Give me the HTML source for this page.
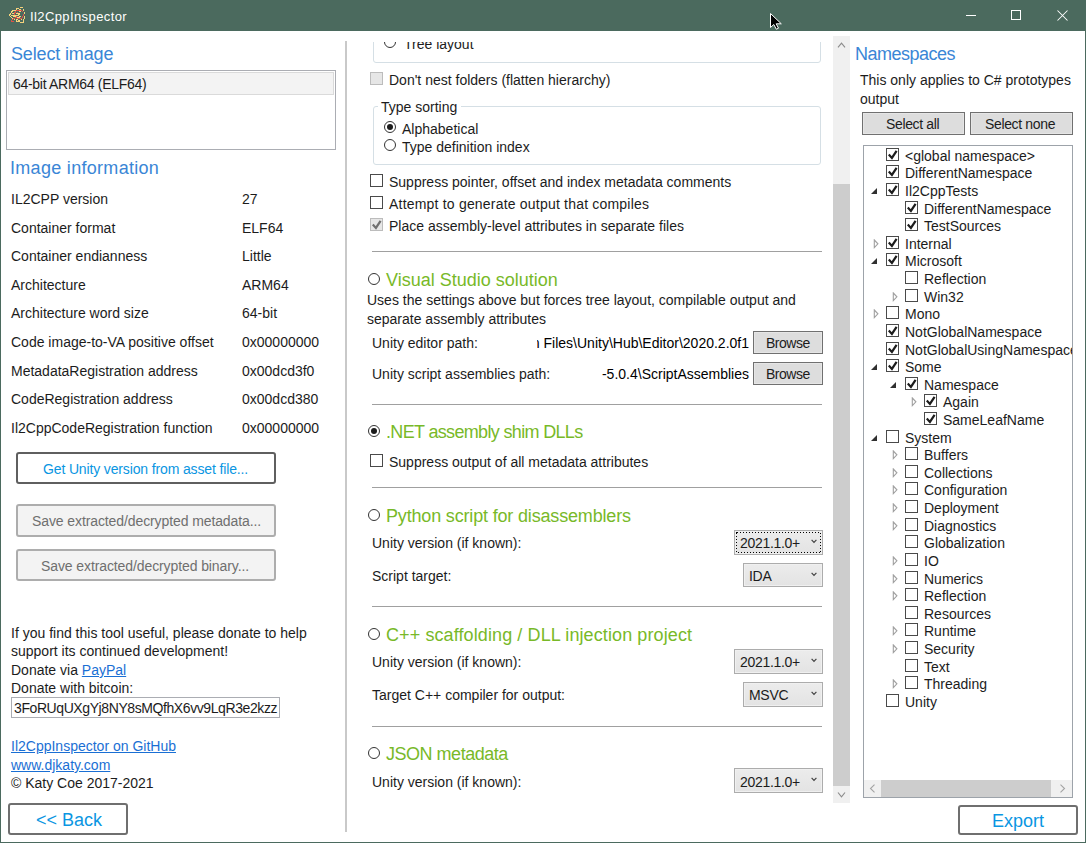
<!DOCTYPE html>
<html><head><meta charset="utf-8"><style>
html,body{margin:0;padding:0;width:1086px;height:843px;overflow:hidden;background:#fff}
body{position:relative;font-family:"Liberation Sans",sans-serif}
.t{position:absolute;white-space:nowrap;font-family:"Liberation Sans",sans-serif}
.r{position:absolute;box-sizing:border-box}
.clip{position:absolute;overflow:hidden}
</style></head><body>

<div class="r" style="left:0px;top:0px;width:1086px;height:31px;background:#4b6a5e"></div>
<div class="r" style="left:0px;top:31px;width:1px;height:812px;background:#4b6a5e"></div>
<div class="r" style="left:1085px;top:31px;width:1px;height:812px;background:#4b6a5e"></div>
<div class="r" style="left:0px;top:842px;width:1086px;height:1px;background:#4b6a5e"></div>
<svg class="r" style="left:7px;top:5px" width="19" height="19" viewBox="0 0 19 19" shape-rendering="crispEdges"><rect x="13" y="2" width="3" height="1" fill="#f5d27c"/><rect x="9" y="3" width="3" height="1" fill="#f5d27c"/><rect x="9" y="4" width="1" height="1" fill="#f5d27c"/><rect x="12" y="4" width="2" height="1" fill="#f5d27c"/><rect x="16" y="4" width="1" height="1" fill="#f5d27c"/><rect x="5" y="5" width="4" height="1" fill="#f5d27c"/><rect x="9" y="5" width="6" height="1" fill="#de5248"/><rect x="16" y="5" width="1" height="1" fill="#f5d27c"/><rect x="4" y="6" width="2" height="1" fill="#f5d27c"/><rect x="8" y="6" width="1" height="1" fill="#de5248"/><rect x="12" y="6" width="2" height="1" fill="#f5d27c"/><rect x="15" y="6" width="1" height="1" fill="#de5248"/><rect x="4" y="7" width="1" height="1" fill="#f5d27c"/><rect x="7" y="7" width="2" height="1" fill="#de5248"/><rect x="10" y="7" width="1" height="1" fill="#de5248"/><rect x="17" y="7" width="1" height="1" fill="#f5d27c"/><rect x="3" y="8" width="1" height="1" fill="#f5d27c"/><rect x="5" y="8" width="2" height="1" fill="#f5d27c"/><rect x="7" y="8" width="1" height="1" fill="#de5248"/><rect x="9" y="8" width="4" height="1" fill="#f5d27c"/><rect x="17" y="8" width="1" height="1" fill="#f5d27c"/><rect x="2" y="9" width="2" height="1" fill="#f5d27c"/><rect x="7" y="9" width="1" height="1" fill="#de5248"/><rect x="11" y="9" width="2" height="1" fill="#f5d27c"/><rect x="16" y="9" width="1" height="1" fill="#de5248"/><rect x="2" y="10" width="1" height="1" fill="#f5d27c"/><rect x="4" y="10" width="8" height="1" fill="#f5d27c"/><rect x="16" y="10" width="1" height="1" fill="#de5248"/><rect x="3" y="11" width="1" height="1" fill="#f5d27c"/><rect x="6" y="11" width="3" height="1" fill="#f5d27c"/><rect x="9" y="11" width="1" height="1" fill="#de5248"/><rect x="12" y="11" width="2" height="1" fill="#f5d27c"/><rect x="15" y="11" width="1" height="1" fill="#de5248"/><rect x="17" y="11" width="1" height="1" fill="#f5d27c"/><rect x="4" y="12" width="1" height="1" fill="#f5d27c"/><rect x="8" y="12" width="2" height="1" fill="#de5248"/><rect x="10" y="12" width="3" height="1" fill="#f5d27c"/><rect x="15" y="12" width="1" height="1" fill="#de5248"/><rect x="17" y="12" width="1" height="1" fill="#f5d27c"/><rect x="5" y="13" width="1" height="1" fill="#f5d27c"/><rect x="6" y="13" width="2" height="1" fill="#de5248"/><rect x="10" y="13" width="5" height="1" fill="#de5248"/><rect x="17" y="13" width="1" height="1" fill="#f5d27c"/><rect x="5" y="14" width="1" height="1" fill="#de5248"/><rect x="7" y="14" width="1" height="1" fill="#f5d27c"/><rect x="9" y="14" width="2" height="1" fill="#f5d27c"/><rect x="14" y="14" width="1" height="1" fill="#f5d27c"/><rect x="16" y="14" width="1" height="1" fill="#f5d27c"/><rect x="4" y="15" width="1" height="1" fill="#de5248"/><rect x="9" y="15" width="1" height="1" fill="#f5d27c"/><rect x="11" y="15" width="2" height="1" fill="#f5d27c"/><rect x="16" y="15" width="1" height="1" fill="#f5d27c"/><rect x="4" y="16" width="3" height="1" fill="#de5248"/><rect x="9" y="16" width="4" height="1" fill="#f5d27c"/><rect x="16" y="16" width="1" height="1" fill="#f5d27c"/><rect x="13" y="17" width="4" height="1" fill="#f5d27c"/></svg>
<div class="t" style="left:30px;top:10px;font-size:13px;line-height:13px;color:#fff;letter-spacing:0.4px">Il2CppInspector</div>
<div class="r" style="left:966px;top:15px;width:10px;height:1px;background:#fff"></div>
<div class="r" style="left:1011px;top:10px;width:10px;height:10px;border:1px solid #fff"></div>
<svg class="r" style="left:1057px;top:10px" width="11" height="11" viewBox="0 0 11 11"><path d="M0.5 0.5 L10.5 10.5 M10.5 0.5 L0.5 10.5" stroke="#fff" stroke-width="1.05"/></svg>
<svg class="r" style="left:769px;top:12px" width="14" height="18" viewBox="0 0 14 18"><path d="M1.5 1.5 L1.5 15.5 L4.8 12.5 L7.3 17.2 L9.5 16.2 L7.2 11.8 L12.3 11.8 Z" fill="#000" stroke="#fff" stroke-width="1"/></svg>
<div class="t" style="left:11px;top:45px;font-size:18px;line-height:18px;color:#3a86d6;letter-spacing:-0.15px">Select image</div>
<div class="r" style="left:6px;top:70px;width:330px;height:80px;border:1px solid #abadb3"></div>
<div class="r" style="left:8px;top:72px;width:326px;height:23px;background:#f3f3f3;border:1px solid #dadada"></div>
<div class="t" style="left:13px;top:77px;font-size:14px;line-height:14px;color:#1c1c1c;letter-spacing:-0.3px">64-bit ARM64 (ELF64)</div>
<div class="t" style="left:10px;top:159px;font-size:18px;line-height:18px;color:#3a86d6;letter-spacing:0.3px">Image information</div>
<div class="t" style="left:11px;top:192px;font-size:14px;line-height:14px;color:#1c1c1c;">IL2CPP version</div>
<div class="t" style="left:242px;top:192px;font-size:14px;line-height:14px;color:#1c1c1c;">27</div>
<div class="t" style="left:11px;top:221px;font-size:14px;line-height:14px;color:#1c1c1c;">Container format</div>
<div class="t" style="left:242px;top:221px;font-size:14px;line-height:14px;color:#1c1c1c;">ELF64</div>
<div class="t" style="left:11px;top:249px;font-size:14px;line-height:14px;color:#1c1c1c;">Container endianness</div>
<div class="t" style="left:242px;top:249px;font-size:14px;line-height:14px;color:#1c1c1c;">Little</div>
<div class="t" style="left:11px;top:278px;font-size:14px;line-height:14px;color:#1c1c1c;">Architecture</div>
<div class="t" style="left:242px;top:278px;font-size:14px;line-height:14px;color:#1c1c1c;">ARM64</div>
<div class="t" style="left:11px;top:306px;font-size:14px;line-height:14px;color:#1c1c1c;">Architecture word size</div>
<div class="t" style="left:242px;top:306px;font-size:14px;line-height:14px;color:#1c1c1c;">64-bit</div>
<div class="t" style="left:11px;top:335px;font-size:14px;line-height:14px;color:#1c1c1c;">Code image-to-VA positive offset</div>
<div class="t" style="left:242px;top:335px;font-size:14px;line-height:14px;color:#1c1c1c;">0x00000000</div>
<div class="t" style="left:11px;top:364px;font-size:14px;line-height:14px;color:#1c1c1c;">MetadataRegistration address</div>
<div class="t" style="left:242px;top:364px;font-size:14px;line-height:14px;color:#1c1c1c;">0x00dcd3f0</div>
<div class="t" style="left:11px;top:392px;font-size:14px;line-height:14px;color:#1c1c1c;">CodeRegistration address</div>
<div class="t" style="left:242px;top:392px;font-size:14px;line-height:14px;color:#1c1c1c;">0x00dcd380</div>
<div class="t" style="left:11px;top:421px;font-size:14px;line-height:14px;color:#1c1c1c;">Il2CppCodeRegistration function</div>
<div class="t" style="left:242px;top:421px;font-size:14px;line-height:14px;color:#1c1c1c;">0x00000000</div>
<div class="r" style="left:16px;top:452px;width:260px;height:32px;border:2px solid #5f5f5f;border-radius:3px;background:#fff"></div>
<div class="t" style="left:43px;top:462px;font-size:14px;line-height:14px;color:#0a96e2;letter-spacing:-0.14px">Get Unity version from asset file...</div>
<div class="r" style="left:16px;top:504px;width:260px;height:33px;border:2px solid #adadad;border-radius:3px;background:#f3f3f3"></div>
<div class="t" style="left:32px;top:514px;font-size:14px;line-height:14px;color:#6f6f6f;letter-spacing:-0.1px">Save extracted/decrypted metadata...</div>
<div class="r" style="left:16px;top:549px;width:260px;height:32px;border:2px solid #adadad;border-radius:3px;background:#f3f3f3"></div>
<div class="t" style="left:41px;top:559px;font-size:14px;line-height:14px;color:#6f6f6f;letter-spacing:-0.1px">Save extracted/decrypted binary...</div>
<div class="t" style="left:11px;top:626px;font-size:14px;line-height:14px;color:#1c1c1c;">If you find this tool useful, please donate to help</div>
<div class="t" style="left:11px;top:644px;font-size:14px;line-height:14px;color:#1c1c1c;">support its continued development!</div>
<div class="t" style="left:11px;top:663px;font-size:14px;line-height:14px;color:#1c1c1c;">Donate via <span style="color:#1a6fd4;text-decoration:underline">PayPal</span></div>
<div class="t" style="left:11px;top:681px;font-size:14px;line-height:14px;color:#1c1c1c;">Donate with bitcoin:</div>
<div class="r" style="left:11px;top:697px;width:269px;height:21px;border:1px solid #abadb3;background:#fff"></div>
<div class="clip" style="left:12px;top:698px;width:267px;height:19px">
<div class="t" style="left:2px;top:3px;font-size:14px;line-height:14px;color:#1c1c1c;letter-spacing:-0.41px">3FoRUqUXgYj8NY8sMQfhX6vv9LqR3e2kzz</div>
</div>
<div class="t" style="left:11px;top:739px;font-size:14px;line-height:14px;color:#1a6fd4;text-decoration:underline">Il2CppInspector on GitHub</div>
<div class="t" style="left:11px;top:758px;font-size:14px;line-height:14px;color:#1a6fd4;text-decoration:underline">www.djkaty.com</div>
<div class="t" style="left:11px;top:776px;font-size:14px;line-height:14px;color:#1c1c1c;">&copy; Katy Coe 2017-2021</div>
<div class="r" style="left:8px;top:803px;width:120px;height:32px;border:2px solid #6f6f6f;border-radius:3px;background:#fff"></div>
<div class="t" style="left:36px;top:811px;font-size:18px;line-height:18px;color:#0a96e2;">&lt;&lt; Back</div>
<div class="r" style="left:345px;top:41px;width:2px;height:791px;background:#c9c9c9"></div>
<div class="clip" style="left:347px;top:42px;width:486px;height:761px">
<div class="r" style="left:26px;top:-42px;width:448px;height:63px;border:1px solid #d5dfe5;border-radius:3px"></div>
<svg class="r" style="left:37px;top:-6px" width="12" height="12" viewBox="0 0 12 12"><circle cx="6" cy="6" r="5.5" fill="#fff" stroke="#333"/></svg>
<div class="t" style="left:57px;top:-5px;font-size:14px;line-height:14px;color:#1c1c1c;">Tree layout</div>
<svg class="r" style="left:23px;top:30px" width="13" height="13" viewBox="0 0 13 13"><rect x="0.5" y="0.5" width="12" height="12" fill="#e6e6e6" stroke="#bcbcbc"/></svg>
<div class="t" style="left:42px;top:31px;font-size:14px;line-height:14px;color:#1c1c1c;">Don't nest folders (flatten hierarchy)</div>
<div class="r" style="left:26px;top:64px;width:448px;height:59px;border:1px solid #d5dfe5;border-radius:3px"></div>
<div class="r" style="left:31px;top:58px;width:83px;height:10px;background:#fff"></div>
<div class="t" style="left:34px;top:58px;font-size:14px;line-height:14px;color:#1c1c1c;">Type sorting</div>
<svg class="r" style="left:37px;top:79px" width="12" height="12" viewBox="0 0 12 12"><circle cx="6" cy="6" r="5.5" fill="#fff" stroke="#333"/><circle cx="6" cy="6" r="3" fill="#1c1c1c"/></svg>
<div class="t" style="left:55px;top:80px;font-size:14px;line-height:14px;color:#1c1c1c;">Alphabetical</div>
<svg class="r" style="left:37px;top:97px" width="12" height="12" viewBox="0 0 12 12"><circle cx="6" cy="6" r="5.5" fill="#fff" stroke="#333"/></svg>
<div class="t" style="left:55px;top:98px;font-size:14px;line-height:14px;color:#1c1c1c;">Type definition index</div>
<svg class="r" style="left:23px;top:132px" width="13" height="13" viewBox="0 0 13 13"><rect x="0.5" y="0.5" width="12" height="12" fill="#fff" stroke="#4a4a4a"/></svg>
<div class="t" style="left:42px;top:133px;font-size:14px;line-height:14px;color:#1c1c1c;">Suppress pointer, offset and index metadata comments</div>
<svg class="r" style="left:23px;top:154px" width="13" height="13" viewBox="0 0 13 13"><rect x="0.5" y="0.5" width="12" height="12" fill="#fff" stroke="#4a4a4a"/></svg>
<div class="t" style="left:42px;top:155px;font-size:14px;line-height:14px;color:#1c1c1c;letter-spacing:0.2px">Attempt to generate output that compiles</div>
<svg class="r" style="left:23px;top:176px" width="13" height="13" viewBox="0 0 13 13"><rect x="0.5" y="0.5" width="12" height="12" fill="#e6e6e6" stroke="#bcbcbc"/><path d="M2.8 6.6 L5.9 9.9 L10.6 2.8" fill="none" stroke="#707070" stroke-width="2.2" stroke-linejoin="miter" stroke-linecap="butt"/></svg>
<div class="t" style="left:42px;top:177px;font-size:14px;line-height:14px;color:#1c1c1c;">Place assembly-level attributes in separate files</div>
<div class="r" style="left:25px;top:209px;width:450px;height:1px;background:#a0a0a0"></div>
<svg class="r" style="left:21px;top:231px" width="12" height="12" viewBox="0 0 12 12"><circle cx="6" cy="6" r="5.5" fill="#fff" stroke="#333"/></svg>
<div class="t" style="left:39px;top:229px;font-size:18px;line-height:18px;color:#78b928;">Visual Studio solution</div>
<div class="t" style="left:20px;top:251px;font-size:14px;line-height:14px;color:#1c1c1c;">Uses the settings above but forces tree layout, compilable output and</div>
<div class="t" style="left:20px;top:270px;font-size:14px;line-height:14px;color:#1c1c1c;">separate assembly attributes</div>
<div class="t" style="left:25px;top:294px;font-size:14px;line-height:14px;color:#1c1c1c;">Unity editor path:</div>
<div class="clip" style="left:190px;top:293px;width:212px;height:20px">
<div class="t" style="right:0px;top:1px;font-size:14px;line-height:14px;color:#000">Program Files\Unity\Hub\Editor\2020.2.0f1</div>
</div>
<div class="r" style="left:406px;top:289px;width:70px;height:23px;background:#dddddd;border:1px solid #707070;box-shadow:inset 0 0 0 1px #e6e6e6"></div>
<div class="t" style="left:419px;top:294px;font-size:14px;line-height:14px;color:#1c1c1c;letter-spacing:-0.5px">Browse</div>
<div class="t" style="left:25px;top:325px;font-size:14px;line-height:14px;color:#1c1c1c;">Unity script assemblies path:</div>
<div class="t" style="right:84px;top:325px;font-size:14px;line-height:14px;color:#000">-5.0.4\ScriptAssemblies</div>
<div class="r" style="left:406px;top:320px;width:70px;height:23px;background:#dddddd;border:1px solid #707070;box-shadow:inset 0 0 0 1px #e6e6e6"></div>
<div class="t" style="left:419px;top:325px;font-size:14px;line-height:14px;color:#1c1c1c;letter-spacing:-0.5px">Browse</div>
<div class="r" style="left:25px;top:362px;width:450px;height:1px;background:#a0a0a0"></div>
<svg class="r" style="left:21px;top:383px" width="12" height="12" viewBox="0 0 12 12"><circle cx="6" cy="6" r="5.5" fill="#fff" stroke="#333"/><circle cx="6" cy="6" r="3" fill="#1c1c1c"/></svg>
<div class="t" style="left:39px;top:381px;font-size:18px;line-height:18px;color:#78b928;letter-spacing:-0.66px">.NET assembly shim DLLs</div>
<svg class="r" style="left:23px;top:412px" width="13" height="13" viewBox="0 0 13 13"><rect x="0.5" y="0.5" width="12" height="12" fill="#fff" stroke="#4a4a4a"/></svg>
<div class="t" style="left:42px;top:413px;font-size:14px;line-height:14px;color:#1c1c1c;">Suppress output of all metadata attributes</div>
<div class="r" style="left:25px;top:445px;width:450px;height:1px;background:#a0a0a0"></div>
<svg class="r" style="left:21px;top:467px" width="12" height="12" viewBox="0 0 12 12"><circle cx="6" cy="6" r="5.5" fill="#fff" stroke="#333"/></svg>
<div class="t" style="left:39px;top:465px;font-size:18px;line-height:18px;color:#78b928;letter-spacing:-0.17px">Python script for disassemblers</div>
<div class="t" style="left:25px;top:494px;font-size:14px;line-height:14px;color:#1c1c1c;">Unity version (if known):</div>
<div class="r" style="left:387px;top:488px;width:89px;height:25px;background:linear-gradient(#ececec,#e3e3e3);border:1px solid #acacac;box-shadow:inset 0 0 0 1px #f0f0f0"></div>
<svg class="r" style="left:389px;top:490px" width="85" height="21"><rect x="0.5" y="0.5" width="84" height="20" fill="none" stroke="#000" stroke-width="1" stroke-dasharray="1 2" shape-rendering="crispEdges"/></svg>
<div class="t" style="left:393px;top:494px;font-size:14px;line-height:14px;color:#1c1c1c;letter-spacing:-0.3px">2021.1.0+</div>
<svg class="r" style="left:464px;top:497px" width="6" height="5" viewBox="0 0 6 5"><path d="M0.6 0.9 L3 3.4 L5.4 0.9" fill="none" stroke="#404040" stroke-width="1.2"/></svg>
<div class="t" style="left:25px;top:527px;font-size:14px;line-height:14px;color:#1c1c1c;">Script target:</div>
<div class="r" style="left:396px;top:521px;width:80px;height:24px;background:linear-gradient(#ececec,#e3e3e3);border:1px solid #acacac;box-shadow:inset 0 0 0 1px #f0f0f0"></div>
<div class="t" style="left:402px;top:527px;font-size:14px;line-height:14px;color:#1c1c1c;letter-spacing:-0.3px">IDA</div>
<svg class="r" style="left:464px;top:530px" width="6" height="5" viewBox="0 0 6 5"><path d="M0.6 0.9 L3 3.4 L5.4 0.9" fill="none" stroke="#404040" stroke-width="1.2"/></svg>
<div class="r" style="left:25px;top:564px;width:450px;height:1px;background:#a0a0a0"></div>
<svg class="r" style="left:21px;top:586px" width="12" height="12" viewBox="0 0 12 12"><circle cx="6" cy="6" r="5.5" fill="#fff" stroke="#333"/></svg>
<div class="t" style="left:39px;top:584px;font-size:18px;line-height:18px;color:#78b928;letter-spacing:0.1px">C++ scaffolding / DLL injection project</div>
<div class="t" style="left:25px;top:613px;font-size:14px;line-height:14px;color:#1c1c1c;">Unity version (if known):</div>
<div class="r" style="left:387px;top:607px;width:89px;height:25px;background:linear-gradient(#ececec,#e3e3e3);border:1px solid #acacac;box-shadow:inset 0 0 0 1px #f0f0f0"></div>
<div class="t" style="left:393px;top:613px;font-size:14px;line-height:14px;color:#1c1c1c;letter-spacing:-0.3px">2021.1.0+</div>
<svg class="r" style="left:464px;top:616px" width="6" height="5" viewBox="0 0 6 5"><path d="M0.6 0.9 L3 3.4 L5.4 0.9" fill="none" stroke="#404040" stroke-width="1.2"/></svg>
<div class="t" style="left:25px;top:646px;font-size:14px;line-height:14px;color:#1c1c1c;">Target C++ compiler for output:</div>
<div class="r" style="left:396px;top:640px;width:80px;height:25px;background:linear-gradient(#ececec,#e3e3e3);border:1px solid #acacac;box-shadow:inset 0 0 0 1px #f0f0f0"></div>
<div class="t" style="left:402px;top:646px;font-size:14px;line-height:14px;color:#1c1c1c;letter-spacing:-0.3px">MSVC</div>
<svg class="r" style="left:464px;top:649px" width="6" height="5" viewBox="0 0 6 5"><path d="M0.6 0.9 L3 3.4 L5.4 0.9" fill="none" stroke="#404040" stroke-width="1.2"/></svg>
<div class="r" style="left:25px;top:684px;width:450px;height:1px;background:#a0a0a0"></div>
<svg class="r" style="left:21px;top:705px" width="12" height="12" viewBox="0 0 12 12"><circle cx="6" cy="6" r="5.5" fill="#fff" stroke="#333"/></svg>
<div class="t" style="left:39px;top:703px;font-size:18px;line-height:18px;color:#78b928;letter-spacing:-0.48px">JSON metadata</div>
<div class="t" style="left:25px;top:733px;font-size:14px;line-height:14px;color:#1c1c1c;">Unity version (if known):</div>
<div class="r" style="left:387px;top:726px;width:89px;height:25px;background:linear-gradient(#ececec,#e3e3e3);border:1px solid #acacac;box-shadow:inset 0 0 0 1px #f0f0f0"></div>
<div class="t" style="left:393px;top:733px;font-size:14px;line-height:14px;color:#1c1c1c;letter-spacing:-0.3px">2021.1.0+</div>
<svg class="r" style="left:464px;top:735px" width="6" height="5" viewBox="0 0 6 5"><path d="M0.6 0.9 L3 3.4 L5.4 0.9" fill="none" stroke="#404040" stroke-width="1.2"/></svg>
</div>
<div class="r" style="left:833px;top:36px;width:17px;height:767px;background:#f0f0f0"></div>
<div class="r" style="left:833px;top:184px;width:17px;height:602px;background:#cdcdcd"></div>
<svg class="r" style="left:837px;top:41px" width="9" height="8" viewBox="0 0 9 8"><path d="M1 6.3 L4.5 2.2 L8 6.3" fill="none" stroke="#8c8c8c" stroke-width="1.15"/></svg>
<svg class="r" style="left:837px;top:791px" width="9" height="8" viewBox="0 0 9 8"><path d="M1 1.5 L4.5 5.8 L8 1.5" fill="none" stroke="#8c8c8c" stroke-width="1.15"/></svg>
<div class="t" style="left:855px;top:45px;font-size:18px;line-height:18px;color:#3a86d6;letter-spacing:-0.5px">Namespaces</div>
<div class="t" style="left:860px;top:73px;font-size:14px;line-height:14px;color:#1c1c1c;">This only applies to C# prototypes</div>
<div class="t" style="left:860px;top:92px;font-size:14px;line-height:14px;color:#1c1c1c;">output</div>
<div class="r" style="left:862px;top:112px;width:103px;height:23px;background:#dddddd;border:1px solid #707070;box-shadow:inset 0 0 0 1px #e6e6e6"></div>
<div class="t" style="left:886px;top:117px;font-size:14px;line-height:14px;color:#1c1c1c;letter-spacing:-0.35px">Select all</div>
<div class="r" style="left:970px;top:112px;width:103px;height:23px;background:#dddddd;border:1px solid #707070;box-shadow:inset 0 0 0 1px #e6e6e6"></div>
<div class="t" style="left:985px;top:117px;font-size:14px;line-height:14px;color:#1c1c1c;letter-spacing:-0.35px">Select none</div>
<div class="r" style="left:863px;top:145px;width:210px;height:653px;border:1px solid #9da3aa;background:#fff"></div>
<div class="clip" style="left:864px;top:146px;width:208px;height:634px">
<svg class="r" style="left:22px;top:2px" width="13" height="13" viewBox="0 0 13 13"><rect x="0.5" y="0.5" width="12" height="12" fill="#fff" stroke="#4a4a4a"/><path d="M2.8 6.6 L5.9 9.9 L10.6 2.8" fill="none" stroke="#1c1c1c" stroke-width="2.2" stroke-linejoin="miter" stroke-linecap="butt"/></svg>
<div class="t" style="left:41px;top:3px;font-size:14px;line-height:14px;color:#1c1c1c;">&lt;global namespace&gt;</div>
<svg class="r" style="left:22px;top:19px" width="13" height="13" viewBox="0 0 13 13"><rect x="0.5" y="0.5" width="12" height="12" fill="#fff" stroke="#4a4a4a"/><path d="M2.8 6.6 L5.9 9.9 L10.6 2.8" fill="none" stroke="#1c1c1c" stroke-width="2.2" stroke-linejoin="miter" stroke-linecap="butt"/></svg>
<div class="t" style="left:41px;top:20px;font-size:14px;line-height:14px;color:#1c1c1c;">DifferentNamespace</div>
<svg class="r" style="left:22px;top:37px" width="13" height="13" viewBox="0 0 13 13"><rect x="0.5" y="0.5" width="12" height="12" fill="#fff" stroke="#4a4a4a"/><path d="M2.8 6.6 L5.9 9.9 L10.6 2.8" fill="none" stroke="#1c1c1c" stroke-width="2.2" stroke-linejoin="miter" stroke-linecap="butt"/></svg>
<div class="t" style="left:41px;top:38px;font-size:14px;line-height:14px;color:#1c1c1c;">Il2CppTests</div>
<svg class="r" style="left:6px;top:41px" width="8" height="8" viewBox="0 0 8 8"><path d="M7 1 L7 7 L1 7 Z" fill="#303030"/></svg>
<svg class="r" style="left:41px;top:55px" width="13" height="13" viewBox="0 0 13 13"><rect x="0.5" y="0.5" width="12" height="12" fill="#fff" stroke="#4a4a4a"/><path d="M2.8 6.6 L5.9 9.9 L10.6 2.8" fill="none" stroke="#1c1c1c" stroke-width="2.2" stroke-linejoin="miter" stroke-linecap="butt"/></svg>
<div class="t" style="left:60px;top:56px;font-size:14px;line-height:14px;color:#1c1c1c;">DifferentNamespace</div>
<svg class="r" style="left:41px;top:72px" width="13" height="13" viewBox="0 0 13 13"><rect x="0.5" y="0.5" width="12" height="12" fill="#fff" stroke="#4a4a4a"/><path d="M2.8 6.6 L5.9 9.9 L10.6 2.8" fill="none" stroke="#1c1c1c" stroke-width="2.2" stroke-linejoin="miter" stroke-linecap="butt"/></svg>
<div class="t" style="left:60px;top:73px;font-size:14px;line-height:14px;color:#1c1c1c;">TestSources</div>
<svg class="r" style="left:22px;top:90px" width="13" height="13" viewBox="0 0 13 13"><rect x="0.5" y="0.5" width="12" height="12" fill="#fff" stroke="#4a4a4a"/><path d="M2.8 6.6 L5.9 9.9 L10.6 2.8" fill="none" stroke="#1c1c1c" stroke-width="2.2" stroke-linejoin="miter" stroke-linecap="butt"/></svg>
<div class="t" style="left:41px;top:91px;font-size:14px;line-height:14px;color:#1c1c1c;">Internal</div>
<svg class="r" style="left:9px;top:93px" width="7" height="10" viewBox="0 0 7 10"><path d="M1.3 1 L4.9 4.8 L1.3 8.6 Z" fill="#fff" stroke="#a0a0a0" stroke-width="1.1"/></svg>
<svg class="r" style="left:22px;top:107px" width="13" height="13" viewBox="0 0 13 13"><rect x="0.5" y="0.5" width="12" height="12" fill="#fff" stroke="#4a4a4a"/><path d="M2.8 6.6 L5.9 9.9 L10.6 2.8" fill="none" stroke="#1c1c1c" stroke-width="2.2" stroke-linejoin="miter" stroke-linecap="butt"/></svg>
<div class="t" style="left:41px;top:108px;font-size:14px;line-height:14px;color:#1c1c1c;">Microsoft</div>
<svg class="r" style="left:6px;top:111px" width="8" height="8" viewBox="0 0 8 8"><path d="M7 1 L7 7 L1 7 Z" fill="#303030"/></svg>
<svg class="r" style="left:41px;top:125px" width="13" height="13" viewBox="0 0 13 13"><rect x="0.5" y="0.5" width="12" height="12" fill="#fff" stroke="#4a4a4a"/></svg>
<div class="t" style="left:60px;top:126px;font-size:14px;line-height:14px;color:#1c1c1c;">Reflection</div>
<svg class="r" style="left:41px;top:143px" width="13" height="13" viewBox="0 0 13 13"><rect x="0.5" y="0.5" width="12" height="12" fill="#fff" stroke="#4a4a4a"/></svg>
<div class="t" style="left:60px;top:144px;font-size:14px;line-height:14px;color:#1c1c1c;">Win32</div>
<svg class="r" style="left:28px;top:146px" width="7" height="10" viewBox="0 0 7 10"><path d="M1.3 1 L4.9 4.8 L1.3 8.6 Z" fill="#fff" stroke="#a0a0a0" stroke-width="1.1"/></svg>
<svg class="r" style="left:22px;top:160px" width="13" height="13" viewBox="0 0 13 13"><rect x="0.5" y="0.5" width="12" height="12" fill="#fff" stroke="#4a4a4a"/></svg>
<div class="t" style="left:41px;top:161px;font-size:14px;line-height:14px;color:#1c1c1c;">Mono</div>
<svg class="r" style="left:9px;top:163px" width="7" height="10" viewBox="0 0 7 10"><path d="M1.3 1 L4.9 4.8 L1.3 8.6 Z" fill="#fff" stroke="#a0a0a0" stroke-width="1.1"/></svg>
<svg class="r" style="left:22px;top:178px" width="13" height="13" viewBox="0 0 13 13"><rect x="0.5" y="0.5" width="12" height="12" fill="#fff" stroke="#4a4a4a"/><path d="M2.8 6.6 L5.9 9.9 L10.6 2.8" fill="none" stroke="#1c1c1c" stroke-width="2.2" stroke-linejoin="miter" stroke-linecap="butt"/></svg>
<div class="t" style="left:41px;top:179px;font-size:14px;line-height:14px;color:#1c1c1c;">NotGlobalNamespace</div>
<svg class="r" style="left:22px;top:196px" width="13" height="13" viewBox="0 0 13 13"><rect x="0.5" y="0.5" width="12" height="12" fill="#fff" stroke="#4a4a4a"/><path d="M2.8 6.6 L5.9 9.9 L10.6 2.8" fill="none" stroke="#1c1c1c" stroke-width="2.2" stroke-linejoin="miter" stroke-linecap="butt"/></svg>
<div class="t" style="left:41px;top:197px;font-size:14px;line-height:14px;color:#1c1c1c;">NotGlobalUsingNamespace</div>
<svg class="r" style="left:22px;top:213px" width="13" height="13" viewBox="0 0 13 13"><rect x="0.5" y="0.5" width="12" height="12" fill="#fff" stroke="#4a4a4a"/><path d="M2.8 6.6 L5.9 9.9 L10.6 2.8" fill="none" stroke="#1c1c1c" stroke-width="2.2" stroke-linejoin="miter" stroke-linecap="butt"/></svg>
<div class="t" style="left:41px;top:214px;font-size:14px;line-height:14px;color:#1c1c1c;">Some</div>
<svg class="r" style="left:6px;top:217px" width="8" height="8" viewBox="0 0 8 8"><path d="M7 1 L7 7 L1 7 Z" fill="#303030"/></svg>
<svg class="r" style="left:41px;top:231px" width="13" height="13" viewBox="0 0 13 13"><rect x="0.5" y="0.5" width="12" height="12" fill="#fff" stroke="#4a4a4a"/><path d="M2.8 6.6 L5.9 9.9 L10.6 2.8" fill="none" stroke="#1c1c1c" stroke-width="2.2" stroke-linejoin="miter" stroke-linecap="butt"/></svg>
<div class="t" style="left:60px;top:232px;font-size:14px;line-height:14px;color:#1c1c1c;">Namespace</div>
<svg class="r" style="left:25px;top:235px" width="8" height="8" viewBox="0 0 8 8"><path d="M7 1 L7 7 L1 7 Z" fill="#303030"/></svg>
<svg class="r" style="left:60px;top:248px" width="13" height="13" viewBox="0 0 13 13"><rect x="0.5" y="0.5" width="12" height="12" fill="#fff" stroke="#4a4a4a"/><path d="M2.8 6.6 L5.9 9.9 L10.6 2.8" fill="none" stroke="#1c1c1c" stroke-width="2.2" stroke-linejoin="miter" stroke-linecap="butt"/></svg>
<div class="t" style="left:79px;top:249px;font-size:14px;line-height:14px;color:#1c1c1c;">Again</div>
<svg class="r" style="left:47px;top:251px" width="7" height="10" viewBox="0 0 7 10"><path d="M1.3 1 L4.9 4.8 L1.3 8.6 Z" fill="#fff" stroke="#a0a0a0" stroke-width="1.1"/></svg>
<svg class="r" style="left:60px;top:266px" width="13" height="13" viewBox="0 0 13 13"><rect x="0.5" y="0.5" width="12" height="12" fill="#fff" stroke="#4a4a4a"/><path d="M2.8 6.6 L5.9 9.9 L10.6 2.8" fill="none" stroke="#1c1c1c" stroke-width="2.2" stroke-linejoin="miter" stroke-linecap="butt"/></svg>
<div class="t" style="left:79px;top:267px;font-size:14px;line-height:14px;color:#1c1c1c;">SameLeafName</div>
<svg class="r" style="left:22px;top:284px" width="13" height="13" viewBox="0 0 13 13"><rect x="0.5" y="0.5" width="12" height="12" fill="#fff" stroke="#4a4a4a"/></svg>
<div class="t" style="left:41px;top:285px;font-size:14px;line-height:14px;color:#1c1c1c;">System</div>
<svg class="r" style="left:6px;top:288px" width="8" height="8" viewBox="0 0 8 8"><path d="M7 1 L7 7 L1 7 Z" fill="#303030"/></svg>
<svg class="r" style="left:41px;top:301px" width="13" height="13" viewBox="0 0 13 13"><rect x="0.5" y="0.5" width="12" height="12" fill="#fff" stroke="#4a4a4a"/></svg>
<div class="t" style="left:60px;top:302px;font-size:14px;line-height:14px;color:#1c1c1c;">Buffers</div>
<svg class="r" style="left:28px;top:304px" width="7" height="10" viewBox="0 0 7 10"><path d="M1.3 1 L4.9 4.8 L1.3 8.6 Z" fill="#fff" stroke="#a0a0a0" stroke-width="1.1"/></svg>
<svg class="r" style="left:41px;top:319px" width="13" height="13" viewBox="0 0 13 13"><rect x="0.5" y="0.5" width="12" height="12" fill="#fff" stroke="#4a4a4a"/></svg>
<div class="t" style="left:60px;top:320px;font-size:14px;line-height:14px;color:#1c1c1c;">Collections</div>
<svg class="r" style="left:28px;top:322px" width="7" height="10" viewBox="0 0 7 10"><path d="M1.3 1 L4.9 4.8 L1.3 8.6 Z" fill="#fff" stroke="#a0a0a0" stroke-width="1.1"/></svg>
<svg class="r" style="left:41px;top:336px" width="13" height="13" viewBox="0 0 13 13"><rect x="0.5" y="0.5" width="12" height="12" fill="#fff" stroke="#4a4a4a"/></svg>
<div class="t" style="left:60px;top:337px;font-size:14px;line-height:14px;color:#1c1c1c;">Configuration</div>
<svg class="r" style="left:28px;top:339px" width="7" height="10" viewBox="0 0 7 10"><path d="M1.3 1 L4.9 4.8 L1.3 8.6 Z" fill="#fff" stroke="#a0a0a0" stroke-width="1.1"/></svg>
<svg class="r" style="left:41px;top:354px" width="13" height="13" viewBox="0 0 13 13"><rect x="0.5" y="0.5" width="12" height="12" fill="#fff" stroke="#4a4a4a"/></svg>
<div class="t" style="left:60px;top:355px;font-size:14px;line-height:14px;color:#1c1c1c;">Deployment</div>
<svg class="r" style="left:28px;top:357px" width="7" height="10" viewBox="0 0 7 10"><path d="M1.3 1 L4.9 4.8 L1.3 8.6 Z" fill="#fff" stroke="#a0a0a0" stroke-width="1.1"/></svg>
<svg class="r" style="left:41px;top:372px" width="13" height="13" viewBox="0 0 13 13"><rect x="0.5" y="0.5" width="12" height="12" fill="#fff" stroke="#4a4a4a"/></svg>
<div class="t" style="left:60px;top:373px;font-size:14px;line-height:14px;color:#1c1c1c;">Diagnostics</div>
<svg class="r" style="left:28px;top:375px" width="7" height="10" viewBox="0 0 7 10"><path d="M1.3 1 L4.9 4.8 L1.3 8.6 Z" fill="#fff" stroke="#a0a0a0" stroke-width="1.1"/></svg>
<svg class="r" style="left:41px;top:389px" width="13" height="13" viewBox="0 0 13 13"><rect x="0.5" y="0.5" width="12" height="12" fill="#fff" stroke="#4a4a4a"/></svg>
<div class="t" style="left:60px;top:390px;font-size:14px;line-height:14px;color:#1c1c1c;">Globalization</div>
<svg class="r" style="left:41px;top:407px" width="13" height="13" viewBox="0 0 13 13"><rect x="0.5" y="0.5" width="12" height="12" fill="#fff" stroke="#4a4a4a"/></svg>
<div class="t" style="left:60px;top:408px;font-size:14px;line-height:14px;color:#1c1c1c;">IO</div>
<svg class="r" style="left:28px;top:410px" width="7" height="10" viewBox="0 0 7 10"><path d="M1.3 1 L4.9 4.8 L1.3 8.6 Z" fill="#fff" stroke="#a0a0a0" stroke-width="1.1"/></svg>
<svg class="r" style="left:41px;top:425px" width="13" height="13" viewBox="0 0 13 13"><rect x="0.5" y="0.5" width="12" height="12" fill="#fff" stroke="#4a4a4a"/></svg>
<div class="t" style="left:60px;top:426px;font-size:14px;line-height:14px;color:#1c1c1c;">Numerics</div>
<svg class="r" style="left:28px;top:428px" width="7" height="10" viewBox="0 0 7 10"><path d="M1.3 1 L4.9 4.8 L1.3 8.6 Z" fill="#fff" stroke="#a0a0a0" stroke-width="1.1"/></svg>
<svg class="r" style="left:41px;top:442px" width="13" height="13" viewBox="0 0 13 13"><rect x="0.5" y="0.5" width="12" height="12" fill="#fff" stroke="#4a4a4a"/></svg>
<div class="t" style="left:60px;top:443px;font-size:14px;line-height:14px;color:#1c1c1c;">Reflection</div>
<svg class="r" style="left:28px;top:445px" width="7" height="10" viewBox="0 0 7 10"><path d="M1.3 1 L4.9 4.8 L1.3 8.6 Z" fill="#fff" stroke="#a0a0a0" stroke-width="1.1"/></svg>
<svg class="r" style="left:41px;top:460px" width="13" height="13" viewBox="0 0 13 13"><rect x="0.5" y="0.5" width="12" height="12" fill="#fff" stroke="#4a4a4a"/></svg>
<div class="t" style="left:60px;top:461px;font-size:14px;line-height:14px;color:#1c1c1c;">Resources</div>
<svg class="r" style="left:41px;top:477px" width="13" height="13" viewBox="0 0 13 13"><rect x="0.5" y="0.5" width="12" height="12" fill="#fff" stroke="#4a4a4a"/></svg>
<div class="t" style="left:60px;top:478px;font-size:14px;line-height:14px;color:#1c1c1c;">Runtime</div>
<svg class="r" style="left:28px;top:480px" width="7" height="10" viewBox="0 0 7 10"><path d="M1.3 1 L4.9 4.8 L1.3 8.6 Z" fill="#fff" stroke="#a0a0a0" stroke-width="1.1"/></svg>
<svg class="r" style="left:41px;top:495px" width="13" height="13" viewBox="0 0 13 13"><rect x="0.5" y="0.5" width="12" height="12" fill="#fff" stroke="#4a4a4a"/></svg>
<div class="t" style="left:60px;top:496px;font-size:14px;line-height:14px;color:#1c1c1c;">Security</div>
<svg class="r" style="left:28px;top:498px" width="7" height="10" viewBox="0 0 7 10"><path d="M1.3 1 L4.9 4.8 L1.3 8.6 Z" fill="#fff" stroke="#a0a0a0" stroke-width="1.1"/></svg>
<svg class="r" style="left:41px;top:513px" width="13" height="13" viewBox="0 0 13 13"><rect x="0.5" y="0.5" width="12" height="12" fill="#fff" stroke="#4a4a4a"/></svg>
<div class="t" style="left:60px;top:514px;font-size:14px;line-height:14px;color:#1c1c1c;">Text</div>
<svg class="r" style="left:41px;top:530px" width="13" height="13" viewBox="0 0 13 13"><rect x="0.5" y="0.5" width="12" height="12" fill="#fff" stroke="#4a4a4a"/></svg>
<div class="t" style="left:60px;top:531px;font-size:14px;line-height:14px;color:#1c1c1c;">Threading</div>
<svg class="r" style="left:28px;top:533px" width="7" height="10" viewBox="0 0 7 10"><path d="M1.3 1 L4.9 4.8 L1.3 8.6 Z" fill="#fff" stroke="#a0a0a0" stroke-width="1.1"/></svg>
<svg class="r" style="left:22px;top:548px" width="13" height="13" viewBox="0 0 13 13"><rect x="0.5" y="0.5" width="12" height="12" fill="#fff" stroke="#4a4a4a"/></svg>
<div class="t" style="left:41px;top:549px;font-size:14px;line-height:14px;color:#1c1c1c;">Unity</div>
</div>
<div class="r" style="left:864px;top:780px;width:208px;height:17px;background:#f0f0f0"></div>
<div class="r" style="left:881px;top:780px;width:170px;height:17px;background:#cdcdcd"></div>
<svg class="r" style="left:869px;top:784px" width="7" height="9" viewBox="0 0 7 9"><path d="M5.5 0.7 L1.5 4.5 L5.5 8.3" fill="none" stroke="#a3a3a3" stroke-width="1.1"/></svg>
<svg class="r" style="left:1059px;top:784px" width="7" height="9" viewBox="0 0 7 9"><path d="M1.5 0.7 L5.5 4.5 L1.5 8.3" fill="none" stroke="#a3a3a3" stroke-width="1.1"/></svg>
<div class="r" style="left:958px;top:805px;width:120px;height:30px;border:2px solid #6f6f6f;border-radius:3px;background:#fff"></div>
<div class="t" style="left:992px;top:812px;font-size:18px;line-height:18px;color:#0a96e2;">Export</div>
</body></html>
